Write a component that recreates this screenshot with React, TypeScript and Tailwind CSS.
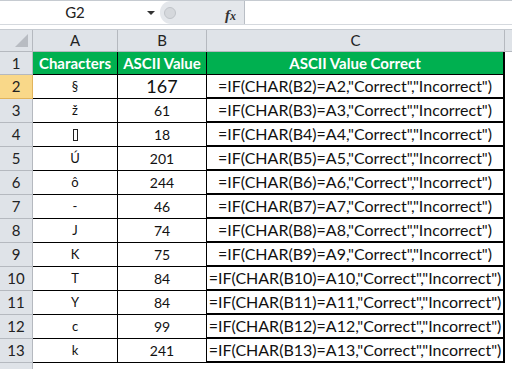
import React from "react";

const rows = [
  { n: 2, a: "§", b: "167", big: true },
  { n: 3, a: "ž", b: "61" },
  { n: 4, a: "BOX", b: "18" },
  { n: 5, a: "Ú", b: "201" },
  { n: 6, a: "ô", b: "244" },
  { n: 7, a: "-", b: "46" },
  { n: 8, a: "J", b: "74" },
  { n: 9, a: "K", b: "75" },
  { n: 10, a: "T", b: "84" },
  { n: 11, a: "Y", b: "84" },
  { n: 12, a: "c", b: "99" },
  { n: 13, a: "k", b: "241" },
];

const font = { fontFamily: "Lato, 'Liberation Sans', sans-serif" };

export default function App() {
  return (
    <div className="w-[512px] h-[369px] overflow-hidden bg-white text-black" style={font}>
      {/* formula bar */}
      <div className="h-[25px] flex border-t border-[#c6cbd1] border-b border-b-[#d5d9de] bg-white">
        <div className="w-[160px] flex items-center relative">
          <span className="w-[150px] text-center text-[15px] text-[#222]">G2</span>
          <span className="absolute left-[147px] top-[10px] w-0 h-0 border-l-[4px] border-r-[4px] border-t-[4px] border-l-transparent border-r-transparent border-t-[#333]" />
        </div>
        <div className="w-[85px] flex items-center bg-[#e4e7eb] rounded-l-[11px] border-r border-[#b9bec5] relative">
          <span className="ml-[4px] w-[12px] h-[12px] rounded-full bg-[#d5d8dc] border border-[#c0c4c9]" />
          <span className="absolute right-[8px] top-[3px] italic font-bold text-[15px] text-[#333]" style={{ fontFamily: "'Liberation Serif', serif" }}>
            f<span className="text-[12px]">x</span>
          </span>
        </div>
        <div className="flex-1" />
      </div>
      <div className="h-[5px] bg-white border-b border-[#c6cbd1]" />
      {/* column header */}
      <div className="flex h-[22px] bg-[#dfe3e8] border-b border-[#b5b9bf]">
        <div className="w-[33px] border-r border-[#b5b9bf] relative">
          <span className="absolute right-[4px] bottom-[4px] w-0 h-0 border-l-[13px] border-b-[13px] border-l-transparent border-b-[#b8bcc2]" />
        </div>
        <div className="w-[85px] border-r border-[#b5b9bf] flex items-center justify-center text-[15px] text-[#222]">A</div>
        <div className="w-[89px] border-r border-[#b5b9bf] flex items-center justify-center text-[15px] text-[#222]">B</div>
        <div className="w-[298px] border-r border-[#b5b9bf] flex items-center justify-center text-[15px] text-[#222]">C</div>
        <div className="flex-1" />
      </div>
      {/* row 1 */}
      <div className="flex h-[23px]">
        <div className="w-[33px] bg-[#dfe3e8] border-r border-b border-[#b5b9bf] flex items-center justify-center text-[15px] text-[#222]">1</div>
        <div className="w-[85px] bg-[#00b050] border-r border-b border-black flex items-center justify-center text-[15px] font-bold text-white">Characters</div>
        <div className="w-[89px] bg-[#00b050] border-r border-b border-black flex items-center justify-center text-[15px] font-bold text-white">ASCII Value</div>
        <div className="w-[298px] bg-[#00b050] border-r-2 border-b border-black flex items-center justify-center text-[15px] font-bold text-white">ASCII Value Correct</div>
        <div className="flex-1" />
      </div>
      {rows.map((r) => (
        <div key={r.n} className="flex h-[24px]">
          <div className={`w-[33px] border-r border-b flex items-center justify-center text-[15px] text-[#222] ${r.n === 2 ? "bg-[#f9d889] border-[#e2b45b]" : "bg-[#dfe3e8] border-[#b5b9bf]"}`}>{r.n}</div>
          <div className="w-[85px] border-r border-b border-black flex items-center justify-center text-[13px] text-[#111]">
            {r.a === "BOX" ? <span className="inline-block w-[5px] h-[12px] border border-[#222]" /> : r.a}
          </div>
          <div className={`w-[89px] border-r border-b border-black flex items-center justify-center text-[#111] ${r.big ? "text-[18px]" : "text-[14px]"}`}>{r.b}</div>
          <div className="w-[298px] border-r-2 border-b-2 border-black flex items-center justify-center text-[16px] text-[#111] whitespace-nowrap">
            {`=IF(CHAR(B${r.n})=A${r.n},"Correct","Incorrect")`}
          </div>
          <div className="flex-1" />
        </div>
      ))}
      <div className="flex h-[10px]">
        <div className="w-[33px] bg-[#dfe3e8] border-r border-[#b5b9bf]" />
      </div>
    </div>
  );
}
